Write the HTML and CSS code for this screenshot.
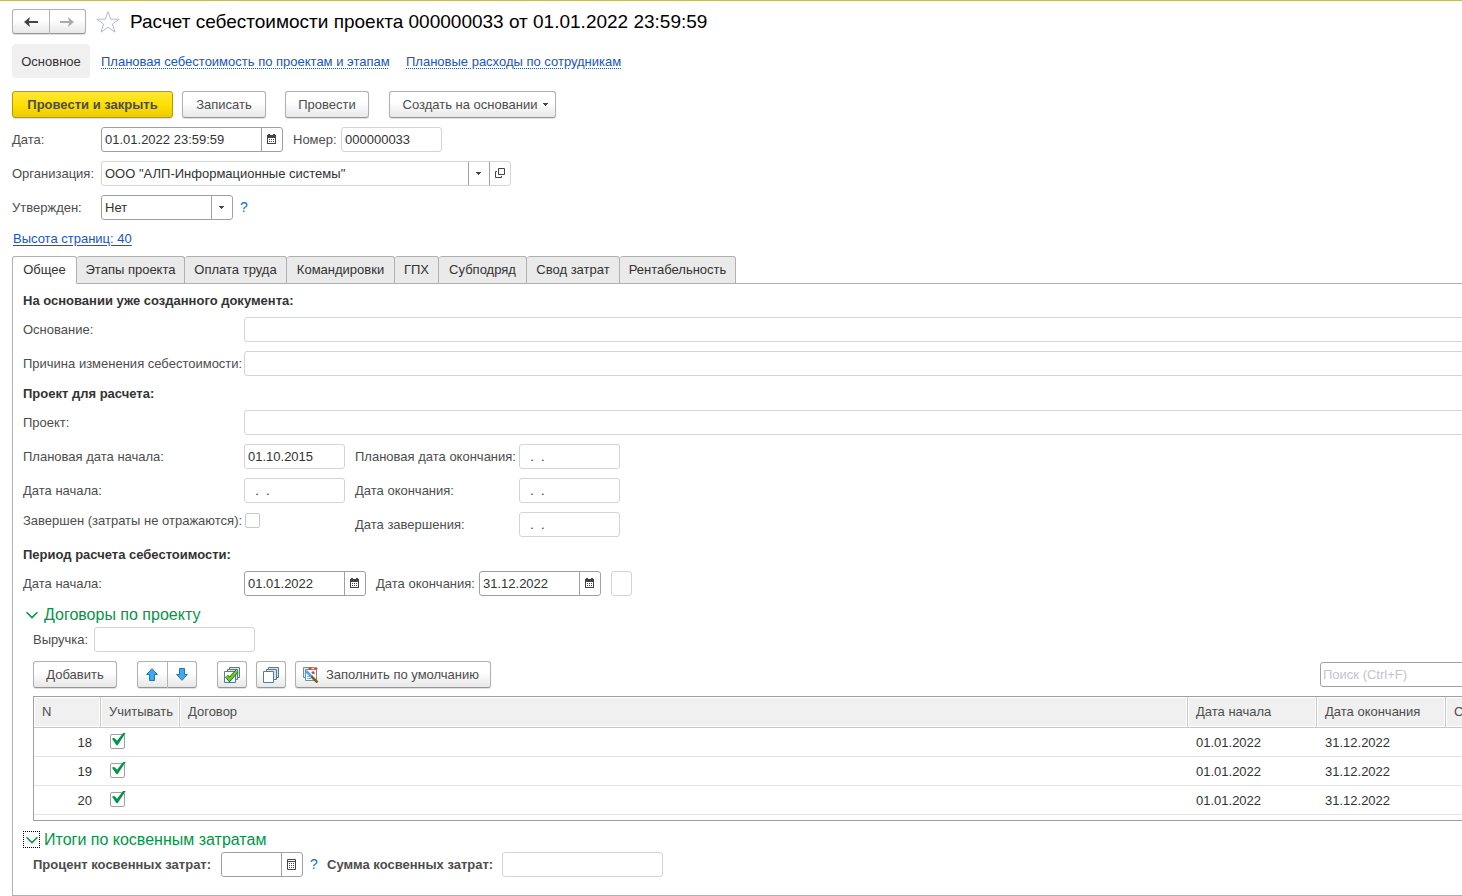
FILE: index.html
```html
<!DOCTYPE html>
<html lang="ru">
<head>
<meta charset="utf-8">
<title>Расчет себестоимости проекта</title>
<link rel="stylesheet" href="styles.css">
</head>
<body>
<svg class="sprite" aria-hidden="true">
  <symbol id="calendar" viewBox="0 0 9 10"><path fill="#444" fill-rule="evenodd" d="M0 1h1V0h2v1h3V0h2v1h1v9H0zM1 4v5h7V4z"/><path fill="#444" d="M2 5h1v1H2zM4 5h1v1H4zM6 5h1v1H6zM2 7h1v1H2zM4 7h1v1H4zM6 7h1v1H6z"/></symbol>
  <symbol id="caret" viewBox="0 0 5 3"><path fill="#444" d="M0 0h5v1H4v1H3v1H2V2H1V1H0z"/></symbol>
  <symbol id="chevron" viewBox="0 0 12 8"><path fill="none" stroke="#009646" stroke-width="1.5" d="M.6 1.2 6 6.6l5.400-5.400"/></symbol>
</svg>
<main class="page">
  <header class="title-row">
    <div class="pair">
      <button class="btn pair-btn" aria-label="Назад"><svg width="14" height="10" viewBox="0 0 14 10"><path fill="#444" d="M0 5 6 0 5 4h9v2H5l1 4z"/></svg></button>
      <button class="btn pair-btn" aria-label="Вперед"><svg width="14" height="10" viewBox="0 0 14 10"><path fill="#aaa" d="M14 5 8 0l1 4H0v2h9l-1 4z"/></svg></button>
    </div>
    <button class="star" aria-label="В избранное"><svg width="24" height="22" viewBox="0 0 24 22"><path fill="#fff" stroke="#b4bac2" d="m12 .6 2.700 7.600h8.500l-6.800 4.900 2.600 8.100L12 16.300l-7 4.900 2.600-8.100L.8 8.200h8.500z"/></svg></button>
    <h1 class="title">Расчет себестоимости проекта 000000033 от 01.01.2022 23:59:59</h1>
  </header>
  <nav class="nav">
    <span class="nav-current">Основное</span>
    <a class="nav-link" href="#plan">Плановая себестоимость по проектам и этапам</a>
    <a class="nav-link" href="#staff">Плановые расходы по сотрудникам</a>
  </nav>
  <div class="commands">
    <button class="btn btn-primary">Провести и закрыть</button>
    <button class="btn btn-write">Записать</button>
    <button class="btn btn-post">Провести</button>
    <button class="btn btn-create">Создать на основании <svg width="5" height="3"><use href="#caret"/></svg></button>
  </div>

  <div class="row head-row">
    <label class="label-head" for="doc-date">Дата:</label>
    <div class="field strong w-datetime"><input id="doc-date" value="01.01.2022 23:59:59"><button class="cell" aria-label="Выбрать дату"><svg width="9" height="10"><use href="#calendar"/></svg></button></div>
    <label class="label-next label-number" for="doc-num">Номер:</label>
    <div class="field w-date"><input id="doc-num" value="000000033"></div>
  </div>
  <div class="row head-row">
    <label class="label-head" for="org">Организация:</label>
    <div class="field w-org"><select id="org"><option>ООО "АЛП-Информационные системы"</option></select><span class="cell"><svg width="5" height="3"><use href="#caret"/></svg></span><button class="cell" aria-label="Открыть"><svg width="10" height="10" viewBox="0 0 10 10"><path fill="none" stroke="#444" d="M3.500.5h6v6h-6zM2 3.500H.5v6h6V8"/></svg></button></div>
  </div>
  <div class="row head-row">
    <label class="label-head" for="approved">Утвержден:</label>
    <div class="field strong w-approved"><select id="approved"><option>Нет</option></select><span class="cell"><svg width="5" height="3"><use href="#caret"/></svg></span></div>
    <button class="help" aria-label="Справка">?</button>
  </div>
  <a class="height-link" href="#height">Высота страниц: 40</a>

  <div class="tabs" role="tablist">
    <button class="tab active" role="tab">Общее</button>
    <button class="tab" role="tab">Этапы проекта</button>
    <button class="tab" role="tab">Оплата труда</button>
    <button class="tab" role="tab">Командировки</button>
    <button class="tab" role="tab">ГПХ</button>
    <button class="tab" role="tab">Субподряд</button>
    <button class="tab" role="tab">Свод затрат</button>
    <button class="tab" role="tab">Рентабельность</button>
  </div>
  <section class="panel">
    <h2 class="section">На основании уже созданного документа:</h2>
    <div class="row"><label class="label-form" for="basis">Основание:</label><div class="field grow"><input id="basis"></div></div>
    <div class="row"><label class="label-form" for="reason">Причина изменения себестоимости:</label><div class="field grow"><input id="reason"></div></div>
    <h2 class="section">Проект для расчета:</h2>
    <div class="row"><label class="label-form" for="project">Проект:</label><div class="field grow"><input id="project"></div></div>
    <div class="row">
      <label class="label-form" for="plan-start">Плановая дата начала:</label><div class="field w-date"><input id="plan-start" value="01.10.2015"></div>
      <label class="label-next label-second" for="plan-end">Плановая дата окончания:</label><div class="field w-date"><input id="plan-end" value="  .  .    "></div>
    </div>
    <div class="row">
      <label class="label-form" for="start">Дата начала:</label><div class="field w-date"><input id="start" value="  .  .    "></div>
      <label class="label-next label-second" for="end">Дата окончания:</label><div class="field w-date"><input id="end" value="  .  .    "></div>
    </div>
    <div class="row">
      <div class="check-group"><label class="label-form" for="finished">Завершен (затраты не отражаются):</label><input class="check" type="checkbox" id="finished"></div>
      <label class="label-next label-second" for="finish-date">Дата завершения:</label><div class="field w-date"><input id="finish-date" value="  .  .    "></div>
    </div>
    <h2 class="section">Период расчета себестоимости:</h2>
    <div class="row">
      <label class="label-form" for="per-start">Дата начала:</label>
      <div class="field strong w-period"><input id="per-start" value="01.01.2022"><button class="cell" aria-label="Выбрать дату начала"><svg width="9" height="10"><use href="#calendar"/></svg></button></div>
      <label class="label-next label-period" for="per-end">Дата окончания:</label>
      <div class="field strong w-period"><input id="per-end" value="31.12.2022"><button class="cell" aria-label="Выбрать дату окончания"><svg width="9" height="10"><use href="#calendar"/></svg></button></div>
      <button class="field square" aria-label="Период"></button>
    </div>

    <h2 class="group"><button class="toggle" aria-label="Свернуть"><svg width="12" height="8"><use href="#chevron"/></svg></button>Договоры по проекту</h2>
    <div class="group-body">
      <div class="row"><label class="label-revenue" for="revenue">Выручка:</label><div class="field w-sum"><input id="revenue"></div></div>
      <div class="toolbar">
        <button class="btn btn-add">Добавить</button>
        <div class="pair pair-move">
          <button class="btn pair-btn" aria-label="Вверх"><svg width="12" height="13" viewBox="0 0 12 13"><path fill="#3fa9f5" stroke="#2475a8" d="M6 .7 11.300 6.500H8.500v6h-5v-6H.7z"/></svg></button>
          <button class="btn pair-btn" aria-label="Вниз"><svg width="12" height="13" viewBox="0 0 12 13"><path fill="#3fa9f5" stroke="#2475a8" d="M6 12.300.7 6.500h2.800v-6h5v6h2.800z"/></svg></button>
        </div>
        <button class="btn btn-icon" aria-label="Отметить все"><svg width="16" height="16" viewBox="0 0 16 16"><g fill="#d5e3ec" stroke="#557c98"><path d="M5.500.5h10v10h-10z"/><path d="M3.500 2.500h10v10h-10z"/><path fill="#fff" d="M.5 4.500h11v11H.5z"/></g><path fill="none" stroke="#327514" stroke-width="4" d="m2.500 9 3 3.500L13 4"/><path fill="none" stroke="#6bd127" stroke-width="2.200" d="m2.500 9 3 3.500L13 4"/></svg></button>
        <button class="btn btn-icon" aria-label="Снять отметки"><svg width="16" height="16" viewBox="0 0 16 16"><g fill="#d5e3ec" stroke="#557c98"><path d="M5.500.5h10v10h-10z"/><path d="M3.500 2.500h10v10h-10z"/><path fill="#fff" d="M.5 4.500h10v11H.5z"/></g></svg></button>
        <button class="btn btn-fill"><svg width="16" height="16" viewBox="0 0 16 16"><path fill="#e4edf3" stroke="#6d8ea5" d="M.5.5h11v10H.5z"/><path fill="#fff" stroke="#6d8ea5" d="M2.500 2.500h11v11h-11z"/><path stroke="#9bb0bf" d="M4 9.500h3M4 11.500h4M9 6.500h3"/><path stroke="#3fa9f5" stroke-width="2.500" d="m3 4 6 6"/><path stroke="#87591b" stroke-width="2.500" d="m8.500 9.500 6 6"/><path stroke="#f0381c" stroke-width="1.200" d="M5.500 1.500h3M7 0v3M11.500 1.500h3M13 0v3M8.500 5.500h3M10 4v3"/></svg>Заполнить по умолчанию</button>
        <div class="field strong search"><input aria-label="Поиск" placeholder="Поиск (Ctrl+F)"></div>
      </div>
      <div class="table-box">
        <table class="grid">
          <colgroup><col class="col-n"><col class="col-use"><col><col class="col-date"><col class="col-date"><col class="col-last"></colgroup>
          <thead><tr><th>N</th><th>Учитывать</th><th>Договор</th><th>Дата начала</th><th>Дата окончания</th><th>С</th></tr></thead>
          <tbody>
            <tr><td class="num">18</td><td><input class="check ticked" type="checkbox" checked aria-label="Учитывать 18"></td><td></td><td>01.01.2022</td><td>31.12.2022</td><td></td></tr>
            <tr><td class="num">19</td><td><input class="check ticked" type="checkbox" checked aria-label="Учитывать 19"></td><td></td><td>01.01.2022</td><td>31.12.2022</td><td></td></tr>
            <tr><td class="num">20</td><td><input class="check ticked" type="checkbox" checked aria-label="Учитывать 20"></td><td></td><td>01.01.2022</td><td>31.12.2022</td><td></td></tr>
          </tbody>
        </table>
      </div>
    </div>

    <h2 class="group"><button class="toggle focused" aria-label="Свернуть"><svg width="12" height="8"><use href="#chevron"/></svg></button>Итоги по косвенным затратам</h2>
    <div class="group-body">
      <div class="row">
        <label class="label-bold label-percent" for="percent">Процент косвенных затрат:</label>
        <div class="field strong w-percent"><input id="percent"><button class="cell" aria-label="Калькулятор"><svg width="9" height="11" viewBox="0 0 9 11"><path fill="none" stroke="#444" d="M.5.5h8v10h-8zM1 2.500h7"/><path fill="#444" d="M2 4h1v1H2zM4 4h1v1H4zM6 4h1v1H6zM2 6h1v1H2zM4 6h1v1H4zM6 6h1v1H6zM2 8h1v1H2zM4 8h1v1H4zM6 8h1v1H6z"/></svg></button></div>
        <button class="help" aria-label="Справка">?</button>
        <label class="label-bold label-sum" for="sum">Сумма косвенных затрат:</label>
        <div class="field w-sum"><input id="sum"></div>
      </div>
    </div>
  </section>
</main>
</body>
</html>
```
FILE: styles.css
```css
* { box-sizing: border-box; }
html { overflow: hidden; }
body {
  margin: 0;
  overflow: hidden;
  background: #fff;
  color: #4d4d4d;
  font: 13px/15px "Liberation Sans", Arial, sans-serif;
  white-space: nowrap;
}
button, input, select { font: inherit; color: inherit; margin: 0; }
button { padding: 0; background: none; border: 0; }
svg { display: block; flex: none; }
.sprite { position: absolute; width: 0; height: 0; }

/* The form is wider than the window and runs past its right edge */
.page {
  margin-right: -26px;
  padding: 8px 0 0 12px;
  border-top: 1px solid #c8b66b;
}

.title-row { display: flex; align-items: center; height: 25px; }
.title { margin: 0 0 0 10px; font-size: 19px; line-height: 24px; font-weight: normal; color: #000; }
.star { margin-left: 10px; }

.btn {
  display: flex;
  align-items: center;
  justify-content: center;
  height: 27px;
  border: 1px solid #b0b0b0;
  border-bottom-color: #969696;
  border-radius: 3px;
  background: linear-gradient(#fff 40%, #e8e8e8);
  box-shadow: 0 1px 1px #ddd;
}
.pair { display: flex; width: 74px; }
.title-row .btn { height: 25px; }
.pair-btn { flex: 1; }
.pair-btn:first-child { border-radius: 3px 0 0 3px; }
.pair-btn:last-child { border-left: 0; border-radius: 0 3px 3px 0; }

.nav { display: flex; align-items: center; margin-top: 10px; }
.nav-current { width: 78px; padding: 10px 0 9px; border-radius: 4px; background: #f0f0f0; color: #333; text-align: center; }
.nav-link { width: 285px; margin-left: 11px; color: #1a55c0; text-decoration: underline dotted 1px; text-underline-offset: 2px; }
.nav-link + .nav-link { margin-left: 20px; }

.commands { display: flex; margin-top: 13px; }
.btn-primary { width: 161px; border-color: #b39b00; background: linear-gradient(#ffe838, #ffe000 50%, #edcb00); font-weight: bold; }
.btn-write { width: 84px; margin-left: 9px; }
.btn-post { width: 84px; margin-left: 19px; }
.btn-create { width: 167px; margin-left: 20px; padding-left: 6px; gap: 6px; }

.row { display: flex; align-items: center; margin-top: 9px; }
.label-head { width: 89px; }
.label-form { width: 221px; flex: none; }
.label-next { margin-left: 10px; }
.label-number { width: 48px; }
.label-second { width: 164px; }
.label-period { width: 103px; }
.label-revenue { width: 61px; }
.label-bold { font-weight: bold; }
.label-percent { width: 188px; }
.label-sum { width: 175px; margin-left: 9px; }

.field {
  display: flex;
  height: 25px;
  border: 1px solid #d4d4d4;
  border-radius: 3px;
  background: #fff;
  color: #333;
}
.field.strong { border-color: #a0a0a0; }
.field input, .field select {
  flex: 1;
  min-width: 0;
  width: 100%;
  padding: 0 3px;
  border: 0;
  outline: 0;
  background: none;
  appearance: none;
}
.cell { display: flex; width: 21px; padding: 0 1px 1px 0; align-items: center; justify-content: center; border-left: 1px solid #a0a0a0; }
.w-datetime { width: 182px; }
.w-date { width: 101px; }
.w-org { width: 410px; }
.w-approved { width: 132px; }
.w-period { width: 122px; }
.w-sum { width: 161px; }
.w-percent { width: 82px; }
.grow { flex: 1; }
.square { width: 21px; margin-left: 10px; }
.help { width: 8px; margin-left: 7px; color: #0a73c0; font-size: 14px; }
.height-link { display: block; width: fit-content; margin: 11px 0 0 1px; color: #1a55c0; text-underline-offset: 2px; }

.tabs { display: grid; grid-template-columns: 65px 108px 102px 108px 44px 88px 93px 116px 1fr; margin-top: 10px; }
.tab {
  height: 28px;
  padding-bottom: 2px;
  border: 1px solid #b0b0b0;
  border-left-width: 0;
  border-radius: 3px 3px 0 0;
  background: #eaeaea;
  color: #333;
}
.tab.active { border-left-width: 1px; border-bottom-color: #fff; background: #fff; }
.tabs::after { content: ""; border-bottom: 1px solid #b0b0b0; }

.panel { padding: 9px 0 18px 10px; border: 1px solid #b0b0b0; border-top: 0; }
.section { margin: 10px 0 0; font-size: 13px; line-height: 15px; color: #333; }
.section:first-child { margin-top: 0; }
.check-group { display: flex; align-items: center; width: 322px; margin-bottom: 8px; }
.check {
  flex: none;
  width: 15px;
  height: 15px;
  margin: 0 0 0 1px;
  appearance: none;
  border: 1px solid #c8c8c8;
  border-radius: 2px;
  background: #fff;
}

.group { display: flex; align-items: center; margin: 9px 0 0; font-size: 16px; line-height: 19px; font-weight: normal; color: #009646; }
.toggle { display: flex; align-items: center; justify-content: center; width: 17px; height: 17px; margin-right: 4px; }
.toggle.focused { outline: 1px dotted #000; outline-offset: -1px; }
.group-body { padding-left: 10px; }
.group-body > .row { margin-top: 3px; }

.toolbar { display: flex; align-items: center; margin-top: 9px; }
.btn-add { width: 84px; }
.pair-move { width: 60px; margin-left: 20px; }
.btn-icon { width: 30px; margin-left: 9px; }
.pair-move + .btn-icon { margin-left: 20px; }
.btn-fill { width: 196px; margin-left: 9px; padding-right: 4px; gap: 7px; }
.search { width: 167px; margin-left: auto; }
.search input { padding: 0 2px; }
.search input::placeholder { color: #c4c4cc; }

.table-box { margin-top: 8px; padding-bottom: 5px; border: 1px solid #a0a0a0; }
.grid { width: 100%; table-layout: fixed; border-collapse: separate; border-spacing: 0; }
.col-n { width: 67px; }
.col-use { width: 79px; }
.col-date { width: 129px; }
.col-last { width: 40px; }
.grid th {
  height: 31px;
  padding: 0 8px 2px;
  border-right: 1px solid #c8c8c8;
  border-bottom: 1px solid #c8c8c8;
  background: #f0f0f0;
  box-shadow: inset -1px -1px #fff, inset 1px 1px #fff;
  font-weight: normal;
  text-align: left;
}
.grid td { height: 29px; padding: 0 8px; border-bottom: 1px solid #e4e4e4; color: #333; }
.grid .num { padding-right: 9px; text-align: right; }
.check.ticked { position: relative; display: block; margin-bottom: 2px; border-color: #a0a0a0; }
.check.ticked::after {
  content: "";
  position: absolute;
  left: 1px;
  top: -2px;
  width: 14px;
  height: 13px;
  background: #009646;
  clip-path: polygon(0 48%, 15% 40%, 36% 64%, 82% 0, 100% 0, 40% 98%, 32% 98%);
}
```
